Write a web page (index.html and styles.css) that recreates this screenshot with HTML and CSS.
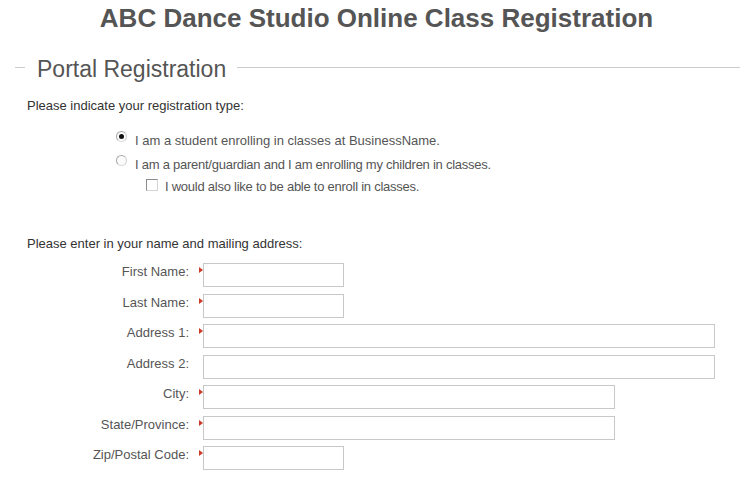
FILE: index.html
```html
<!DOCTYPE html>
<html>
<head>
<meta charset="utf-8">
<link rel="stylesheet" href="styles.css">
</head>
<body>
<h1 class="title">ABC Dance Studio Online Class Registration</h1>
<div class="section-head"><span class="section-title">Portal Registration</span></div>
<p class="intro">Please indicate your registration type:</p>
<div class="option opt1">
  <span class="radio checked"></span><span class="opt-text">I am a student enrolling in classes at BusinessName.</span>
</div>
<div class="option opt2">
  <span class="radio"></span><span class="opt-text tight">I am a parent/guardian and I am enrolling my children in classes.</span>
</div>
<div class="option opt3">
  <span class="check"></span><span class="opt-text tight">I would also like to be able to enroll in classes.</span>
</div>
<p class="intro intro2">Please enter in your name and mailing address:</p>
<div class="form-grid">
  <label class="lbl">First Name:</label><span class="req"></span><span class="field short"></span>
  <label class="lbl">Last Name:</label><span class="req"></span><span class="field short"></span>
  <label class="lbl">Address 1:</label><span class="req"></span><span class="field long"></span>
  <label class="lbl">Address 2:</label><span class="noreq"></span><span class="field long"></span>
  <label class="lbl">City:</label><span class="req"></span><span class="field mid"></span>
  <label class="lbl">State/Province:</label><span class="req"></span><span class="field mid"></span>
  <label class="lbl">Zip/Postal Code:</label><span class="req"></span><span class="field short"></span>
</div>
</body>
</html>
```
FILE: styles.css
```css
html, body {
  margin: 0;
  padding: 0;
  background: #fff;
}
body {
  font-family: "Liberation Sans", Arial, sans-serif;
  font-size: 13px;
  color: #333;
  width: 753px;
  height: 478px;
  overflow: hidden;
}
.title {
  margin: 0;
  padding-top: 4px;
  font-size: 26px;
  line-height: 28px;
  font-weight: bold;
  color: #555;
  text-align: center;
}
.section-head {
  display: flex;
  align-items: center;
  margin-top: 21px;
  padding: 0 13px 0 15px;
  height: 28px;
}
.section-head::before {
  content: "";
  width: 10px;
  border-top: 1px solid #ccc;
}
.section-head::after {
  content: "";
  flex: 1;
  border-top: 1px solid #ccc;
}
.section-title {
  font-size: 23px;
  line-height: 28px;
  color: #555;
  padding: 0 11px 0 12px;
  margin-top: 3px;
}
.intro {
  margin: 17px 0 0 27px;
  line-height: 15px;
  color: #333;
}
.option {
  display: flex;
  align-items: flex-start;
  line-height: 15px;
  color: #555;
}
.tight {
  letter-spacing: -0.25px;
}
.opt1 { margin-top: 20px; padding-left: 116px; }
.opt2 { margin-top: 9px; padding-left: 116px; }
.opt3 { margin-top: 7px; padding-left: 146px; }
.radio {
  position: relative;
  box-sizing: border-box;
  width: 11px;
  height: 11px;
  border-radius: 50%;
  border: 1px solid #a8a8a8;
  border-bottom-color: #dcdcdc;
  border-right-color: #d0d0d0;
  background: #fbfbfb;
  margin-top: -2px;
  margin-right: 8px;
  flex: none;
}
.radio.checked::after {
  content: "";
  position: absolute;
  left: 2px;
  top: 2px;
  width: 5px;
  height: 5px;
  border-radius: 50%;
  background: #111;
}
.check {
  box-sizing: border-box;
  width: 12px;
  height: 12px;
  border: 1px solid #8c8c8c;
  border-right-color: #d4d4d4;
  border-bottom-color: #d4d4d4;
  background: #fff;
  margin-top: 0;
  margin-right: 7px;
  flex: none;
}
.intro2 {
  margin-top: 42px;
}
.form-grid {
  display: grid;
  grid-template-columns: 199px 4px auto;
  row-gap: 6.5px;
  margin-top: 12px;
  align-items: start;
}
.lbl {
  text-align: right;
  padding-right: 10px;
  padding-top: 1px;
  line-height: 15px;
  color: #555;
}
.req {
  width: 0;
  height: 0;
  margin-top: 4px;
  border-top: 3px solid transparent;
  border-bottom: 3px solid transparent;
  border-left: 4px solid #cc3a2a;
}
.field {
  display: block;
  box-sizing: border-box;
  height: 24px;
  border: 1px solid #c8c8c8;
  background: #fff;
}
.short { width: 141px; }
.mid { width: 412px; }
.long { width: 512px; }
```
